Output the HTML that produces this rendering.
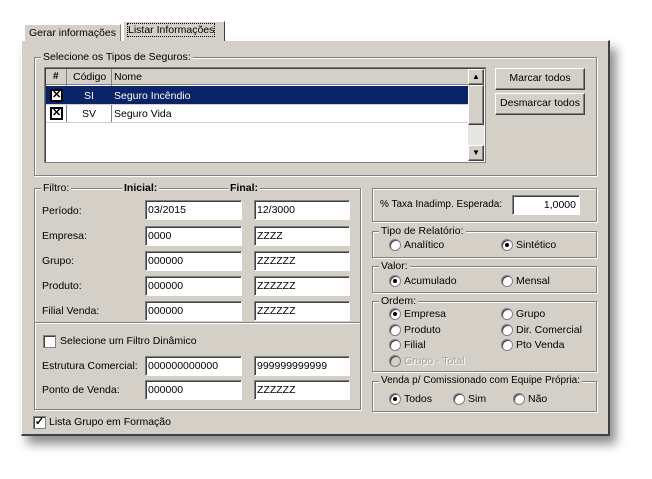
<!DOCTYPE html>
<html><head><meta charset="utf-8"><style>
*{box-sizing:border-box}
body{margin:0;width:652px;height:479px;background:#fff;font-family:"Liberation Sans",Arial,sans-serif;font-size:10.5px;color:#000;position:relative;overflow:hidden;white-space:nowrap}
.a{position:absolute}
.win{left:21px;top:40px;width:589px;height:396px;background:#d4d0c8;border:1px solid #fff;border-right:2px solid #404040;border-bottom:2px solid #404040;box-shadow:6px 8px 10px rgba(0,0,0,.45)}
.tab{background:#d4d0c8;border:1px solid #fff;border-right:1px solid #404040;border-bottom:none;padding:2px 4px;white-space:nowrap}
.grp{border:1px solid #808080;box-shadow:inset 1px 1px 0 #fff,1px 1px 0 #fff}
.lg{position:absolute;top:-7px;left:6px;background:#d4d0c8;padding:0 2px;line-height:12px}
.inp{background:#fff;border-top:1px solid #808080;border-left:1px solid #808080;border-right:1px solid #fff;border-bottom:1px solid #fff;box-shadow:inset 1px 1px 0 #404040;height:20px;padding:2px 0 0 2px;line-height:14px}
.btn{background:#d4d0c8;border:1px solid #fff;border-right:1px solid #404040;border-bottom:1px solid #404040;box-shadow:inset -1px -1px 0 #808080;text-align:center;line-height:19px}
.rd{position:absolute;width:12px;height:12px;border-radius:50%;background:#fff;border:1px solid #808080;box-shadow:inset 1px 1px 0 #404040}
.rd.on::after{content:"";position:absolute;left:3px;top:3px;width:4px;height:4px;border-radius:50%;background:#000}
.cb{position:absolute;width:13px;height:13px;background:#fff;border:1px solid #808080;box-shadow:inset 1px 1px 0 #404040}
</style></head><body>
<div class="a win"></div>
<div class="a tab" style="left:24px;top:24px;height:17px;border-right:1px solid #808080">Gerar informações</div>
<div class="a tab" style="left:123px;top:21px;height:20px;width:102px;background:#d4d0c8;z-index:2"><span style="outline:1px dotted #000">Listar Informações</span></div>
<div class="a" style="left:124px;top:40px;width:100px;height:2px;background:#d4d0c8;z-index:2"></div>

<div class="a grp" style="left:34px;top:57px;width:563px;height:119px"><span class="lg">Selecione os Tipos de Seguros:</span></div>
<div class="a" style="left:44px;top:67px;width:442px;height:96px;background:#fff;border:1px solid #808080;box-shadow:inset 1px 1px 0 #404040"></div>
<div class="a" style="left:46px;top:69px;width:422px;height:16px;background:#d4d0c8;border-bottom:1px solid #808080"></div>
<div class="a" style="left:66px;top:69px;width:1px;height:54px;background:#808080"></div>
<div class="a" style="left:111px;top:69px;width:1px;height:54px;background:#808080"></div>
<div class="a" style="left:53px;top:71px;font-weight:bold;font-size:10px">#</div>
<div class="a" style="left:73px;top:71px">Código</div>
<div class="a" style="left:114px;top:71px">Nome</div>
<div class="a" style="left:46px;top:86px;width:422px;height:18px;background:#0a246a"></div>
<div class="a" style="left:46px;top:104px;width:422px;height:1px;background:#d4d0c8"></div>
<div class="a" style="left:46px;top:122px;width:422px;height:1px;background:#d4d0c8"></div>
<div class="a" style="left:50px;top:89px;width:13px;height:13px;background:#fff;border:2px solid #000;font-size:11px;line-height:9px;text-align:center;font-weight:bold">✕</div>
<div class="a" style="left:50px;top:107px;width:13px;height:13px;background:#fff;border:2px solid #000;font-size:11px;line-height:9px;text-align:center;font-weight:bold">✕</div>
<div class="a" style="left:84px;top:90px;color:#fff">SI</div>
<div class="a" style="left:114px;top:90px;color:#fff">Seguro Incêndio</div>
<div class="a" style="left:82px;top:108px">SV</div>
<div class="a" style="left:114px;top:108px">Seguro Vida</div>
<div class="a" style="left:468px;top:69px;width:16px;height:92px;background:#e8e6e0"></div>
<div class="a btn" style="left:468px;top:69px;width:16px;height:16px;line-height:14px;font-size:8px">▲</div>
<div class="a btn" style="left:468px;top:85px;width:16px;height:40px"></div>
<div class="a btn" style="left:468px;top:145px;width:16px;height:16px;line-height:14px;font-size:8px">▼</div>
<div class="a btn" style="left:495px;top:68px;width:90px;height:22px">Marcar todos</div>
<div class="a btn" style="left:495px;top:93px;width:90px;height:22px">Desmarcar todos</div>

<div class="a grp" style="left:34px;top:188px;width:327px;height:222px"><span class="lg">Filtro:</span></div>
<div class="a" style="left:122px;top:182px;background:#d4d0c8;padding:0 2px;font-weight:bold">Inicial:</div>
<div class="a" style="left:228px;top:182px;background:#d4d0c8;padding:0 2px;font-weight:bold">Final:</div>
<div class="a" style="left:35px;top:322px;width:325px;height:2px;border-top:1px solid #808080;border-bottom:1px solid #fff"></div>
<div class="a" style="left:42px;top:204px;line-height:14px">Período:</div>
<div class="a" style="left:42px;top:230px">Empresa:</div>
<div class="a" style="left:42px;top:255px">Grupo:</div>
<div class="a" style="left:42px;top:280px">Produto:</div>
<div class="a" style="left:42px;top:305px">Filial Venda:</div>
<div class="a inp" style="left:145px;top:200px;width:97px">03/2015</div>
<div class="a inp" style="left:254px;top:200px;width:96px">12/3000</div>
<div class="a inp" style="left:145px;top:226px;width:97px">0000</div>
<div class="a inp" style="left:254px;top:226px;width:96px">ZZZZ</div>
<div class="a inp" style="left:145px;top:251px;width:97px">000000</div>
<div class="a inp" style="left:254px;top:251px;width:96px">ZZZZZZ</div>
<div class="a inp" style="left:145px;top:276px;width:97px">000000</div>
<div class="a inp" style="left:254px;top:276px;width:96px">ZZZZZZ</div>
<div class="a inp" style="left:145px;top:301px;width:97px">000000</div>
<div class="a inp" style="left:254px;top:301px;width:96px">ZZZZZZ</div>
<div class="cb" style="left:43px;top:335px"></div>
<div class="a" style="left:60px;top:335px">Selecione um Filtro Dinâmico</div>
<div class="a" style="left:42px;top:360px">Estrutura Comercial:</div>
<div class="a" style="left:42px;top:384px">Ponto de Venda:</div>
<div class="a inp" style="left:145px;top:356px;width:97px">000000000000</div>
<div class="a inp" style="left:254px;top:356px;width:96px">999999999999</div>
<div class="a inp" style="left:145px;top:380px;width:97px">000000</div>
<div class="a inp" style="left:254px;top:380px;width:96px">ZZZZZZ</div>
<div class="cb" style="left:33px;top:416px;font-size:11px;line-height:10px;text-align:center;font-weight:bold">✓</div>
<div class="a" style="left:49px;top:416px">Lista Grupo em Formação</div>

<div class="a grp" style="left:372px;top:188px;width:225px;height:34px"></div>
<div class="a" style="left:380px;top:199px;font-size:10px">% Taxa Inadimp. Esperada:</div>
<div class="a inp" style="left:512px;top:195px;width:68px;text-align:right;padding-right:3px">1,0000</div>

<div class="a grp" style="left:372px;top:231px;width:225px;height:27px"><span class="lg">Tipo de Relatório:</span></div>
<div class="rd" style="left:389px;top:239px"></div><div class="a" style="left:404px;top:239px">Analítico</div>
<div class="rd on" style="left:501px;top:239px"></div><div class="a" style="left:516px;top:239px">Sintético</div>

<div class="a grp" style="left:372px;top:266px;width:225px;height:27px"><span class="lg">Valor:</span></div>
<div class="rd on" style="left:389px;top:275px"></div><div class="a" style="left:404px;top:275px">Acumulado</div>
<div class="rd" style="left:501px;top:275px"></div><div class="a" style="left:516px;top:275px">Mensal</div>

<div class="a grp" style="left:372px;top:301px;width:225px;height:71px"><span class="lg">Ordem:</span></div>
<div class="rd on" style="left:389px;top:308px"></div><div class="a" style="left:404px;top:308px">Empresa</div>
<div class="rd" style="left:501px;top:308px"></div><div class="a" style="left:516px;top:308px">Grupo</div>
<div class="rd" style="left:389px;top:324px"></div><div class="a" style="left:404px;top:324px">Produto</div>
<div class="rd" style="left:501px;top:324px"></div><div class="a" style="left:516px;top:324px">Dir. Comercial</div>
<div class="rd" style="left:389px;top:339px"></div><div class="a" style="left:404px;top:339px">Filial</div>
<div class="rd" style="left:501px;top:339px"></div><div class="a" style="left:516px;top:339px">Pto Venda</div>
<div class="rd" style="left:389px;top:355px;background:#d4d0c8"></div><div class="a" style="left:404px;top:355px;color:#a0a0a0;text-shadow:1px 1px 0 #fff">Grupo - Total</div>

<div class="a grp" style="left:372px;top:381px;width:225px;height:31px"><span class="lg" style="font-size:10px">Venda p/ Comissionado com Equipe Própria:</span></div>
<div class="rd on" style="left:389px;top:393px"></div><div class="a" style="left:404px;top:393px">Todos</div>
<div class="rd" style="left:453px;top:393px"></div><div class="a" style="left:468px;top:393px">Sim</div>
<div class="rd" style="left:513px;top:393px"></div><div class="a" style="left:528px;top:393px">Não</div>
</body></html>
